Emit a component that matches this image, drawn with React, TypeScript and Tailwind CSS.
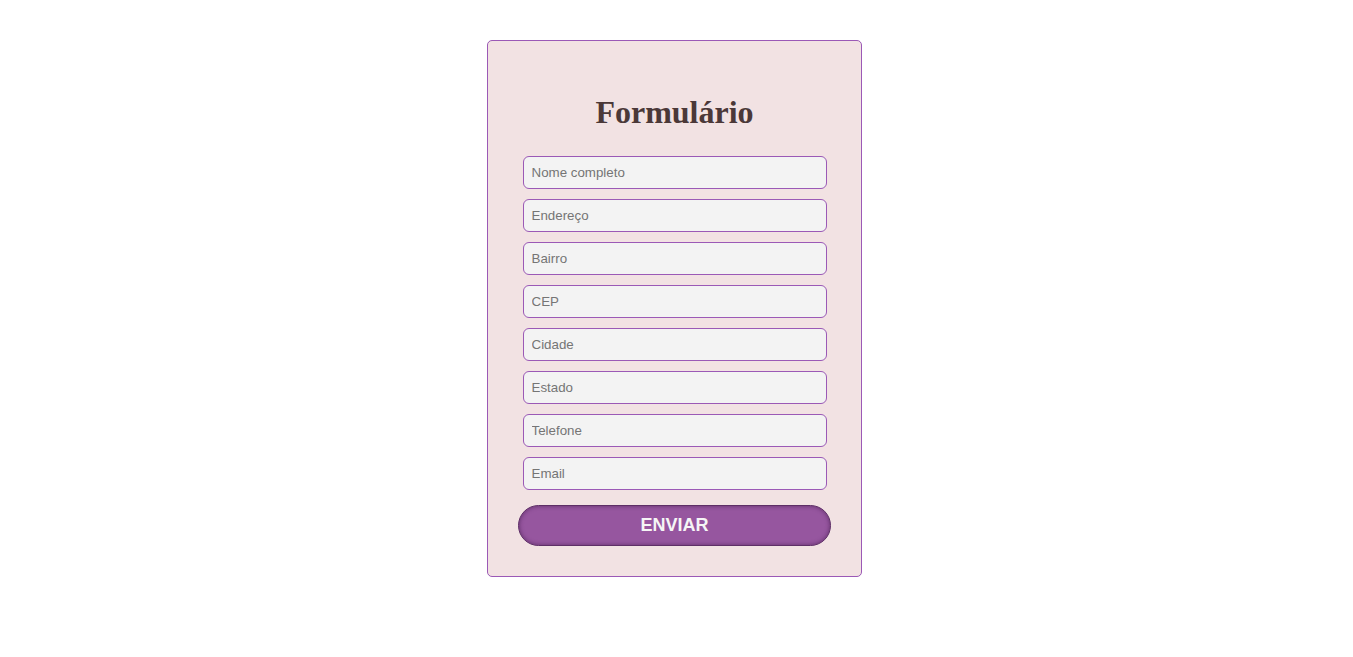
import React from 'react';

const fields = ['Nome completo', 'Endereço', 'Bairro', 'CEP', 'Cidade', 'Estado', 'Telefone', 'Email'];

export default function App() {
  return (
    <div className="min-h-screen bg-white pr-[4px] pt-[40px]">
      <form
        onSubmit={e => e.preventDefault()}
        className="mx-auto flex w-[375px] flex-col items-center rounded-[5px] border border-[#9b59b6] bg-[#f2e2e3] pt-[53px] pb-[30px]"
      >
        <h1 className="mb-[25px] text-[32px] font-bold leading-[37px] text-[#4b3838] [font-family:'Liberation_Serif',serif]">
          Formulário
        </h1>
        <div className="flex flex-col gap-[10px]">
          {fields.map(f => (
            <input
              key={f}
              type="text"
              placeholder={f}
              className="h-[33px] w-[304px] rounded-[6px] border border-[#9b59b6] bg-[#f3f3f3] px-[8px] text-[13.33px] text-[#333] outline-none placeholder:text-[#757575] [font-family:'Liberation_Sans',Arial,sans-serif]"
            />
          ))}
        </div>
        <button
          type="submit"
          className="mt-[15px] h-[41px] w-[313px] rounded-full border border-[#5e2f66] bg-[#96569f] text-[18px] font-bold text-[#f5f5f5] shadow-[inset_0_0_4px_rgba(60,20,70,0.6)] [font-family:'Liberation_Sans',Arial,sans-serif]"
        >
          ENVIAR
        </button>
      </form>
    </div>
  );
}
